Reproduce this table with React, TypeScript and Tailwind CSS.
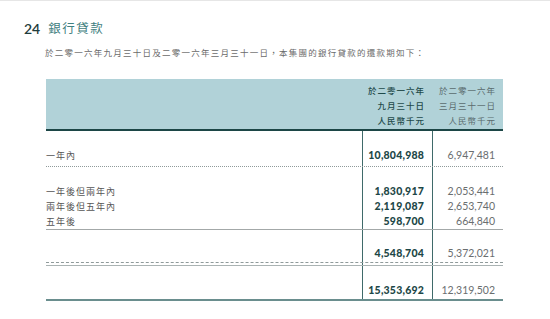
import React from 'react';

const CJK = '[font-family:"Noto_Sans_CJK_TC","Noto_Sans_CJK_SC",sans-serif]';
const NUM = '[font-family:Lato,"Noto_Sans_CJK_TC",sans-serif]';

type Row = { label: string; cur: string; prev: string };

const SEC_A: Row[] = [{ label: '一年內', cur: '10,804,988', prev: '6,947,481' }];
const SEC_B: Row[] = [
  { label: '一年後但兩年內', cur: '1,830,917', prev: '2,053,441' },
  { label: '兩年後但五年內', cur: '2,119,087', prev: '2,653,740' },
  { label: '五年後', cur: '598,700', prev: '664,840' },
];
const SEC_C: Row[] = [{ label: '', cur: '4,548,704', prev: '5,372,021' }];
const SEC_D: Row[] = [{ label: '', cur: '15,353,692', prev: '12,319,502' }];

export default function App() {
  return (
    <div className="w-[550px] h-[319px] bg-white overflow-hidden border-t border-[#e6e6e6]">
      {/* title */}
      <div className="flex items-center h-[20px] mt-[17px] ml-[24px]">
        <span className={`${NUM} text-[14px] font-semibold text-[#1f3d3d]`}>24</span>
        <span className={`${CJK} ml-[8px] text-[12.5px] tracking-[1.5px] text-[#3f8080]`}>銀行貸款</span>
      </div>
      <p className={`${CJK} ml-[45px] mt-[8px] text-[8.5px] leading-[12px] tracking-[1.25px] text-[#6b6b6b]`}>
        於二零一六年九月三十日及二零一六年三月三十一日，本集團的銀行貸款的還款期如下：
      </p>

      {/* table */}
      <div className="ml-[46px] mt-[21px] w-[457px]">
        <div className="h-[52px] bg-[#b1d2d8] border-b-2 border-[#1c4646] flex">
          <div className="flex-1" />
          <div className={`${CJK} w-[71px] pr-[8px] pt-[4px] text-right text-[8.5px] leading-[15px] tracking-[1px] text-[#1f4a4a] font-medium`}>
            <div>於二零一六年</div>
            <div>九月三十日</div>
            <div>人民幣千元</div>
          </div>
          <div className={`${CJK} w-[70px] pr-[7px] pt-[4px] text-right text-[8.5px] leading-[15px] tracking-[1px] text-[#5a6b6d]`}>
            <div>於二零一六年</div>
            <div>三月三十一日</div>
            <div>人民幣千元</div>
          </div>
        </div>

        <Section rows={SEC_A} line="border-b border-dotted border-[#8f9a9a]" pt="pt-[18px]" pb="pb-[3px]" />
        <Section rows={SEC_B} line="border-b border-[#a3a8a8]" pt="pt-[17px]" pb="pb-0" h="h-[15px]" />
        <Section rows={SEC_C} line="border-b border-dashed border-[#8f9a9a]" pt="pt-[17px]" pb="pb-[1px]" />
        <Section rows={[]} line="border-b border-[#aab3b3]" pt="pt-[2px]" pb="pb-0" />
        <Section rows={SEC_D} line="border-b-2 border-[#6a8e8e]" pt="pt-[18px]" pb="pb-[1px]" />
      </div>
    </div>
  );
}

function Section({ rows, line, pt, pb, h = 'h-[14px]' }: { rows: Row[]; line: string; pt: string; pb: string; h?: string }) {
  return (
    <div className={`flex ${line}`}>
      <div className={`flex-1 ${pt} ${pb}`}>
        {rows.map((r, i) => (
          <div key={i} className={`${CJK} ${h} flex items-center text-[9px] tracking-[1px] text-[#555]`}>{r.label}</div>
        ))}
      </div>
      <div className={`w-[71px] border-x border-[#3f6a6a] ${pt} ${pb}`}>
        {rows.map((r, i) => (
          <div key={i} className={`${NUM} ${h} flex items-center justify-end pr-[8px] text-[10.5px] font-black tracking-[0.2px] text-[#1d4747]`}>{r.cur}</div>
        ))}
      </div>
      <div className={`w-[70px] ${pt} ${pb}`}>
        {rows.map((r, i) => (
          <div key={i} className={`${NUM} ${h} flex items-center justify-end pr-[8px] text-[10.5px] font-normal text-[#6a6e6f]`}>{r.prev}</div>
        ))}
      </div>
    </div>
  );
}
